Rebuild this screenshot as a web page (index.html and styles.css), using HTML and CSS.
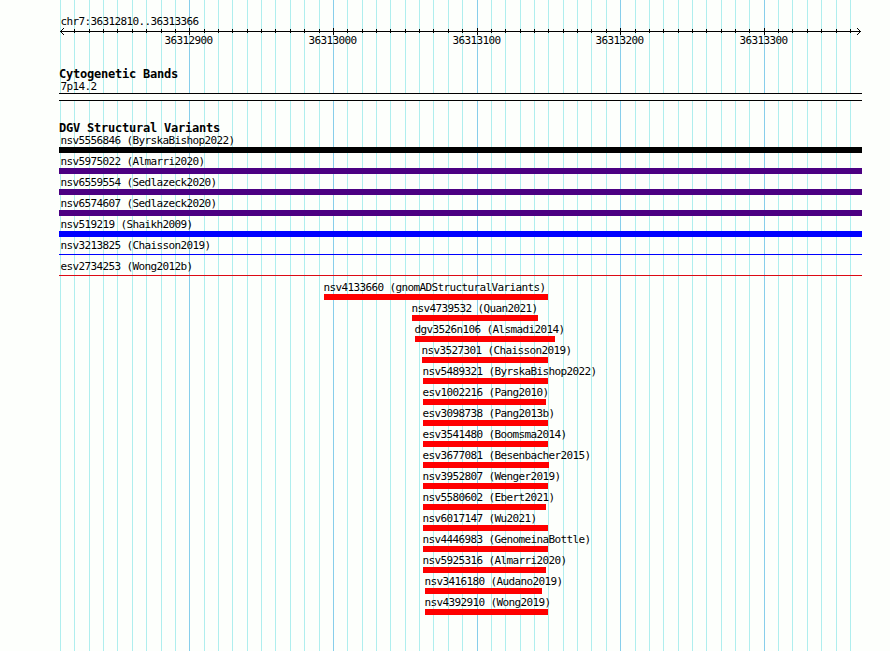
FILE: index.html
```
<!DOCTYPE html>
<html lang="en">
<head>
  <meta charset="UTF-8" />
  <meta name="viewport" content="width=device-width, initial-scale=1.0"/>
  <title>DGV Genome Browser</title>
  <link rel="stylesheet" href="styles.css">
</head>
<body>

  <div class="browser">
    <svg class="grid" id="grid" width="890" height="651"></svg>

    <div class="overview">
      <div class="label region">chr7:36312810..36313366</div>
      <svg class="ruler" id="ruler" width="890" height="22"></svg>
    </div>

    <div class="track bands">
      <h3>Cytogenetic Bands</h3>
      <div class="label">7p14.2</div>
      <div class="band"></div>
    </div>

    <div class="track variants">
      <h3>DGV Structural Variants</h3>
      <div id="variants"></div>
    </div>
  </div>

  <script src="script.js"></script>
</body>
</html>
```
FILE: styles.css
```
body {
  margin: 0;
  padding: 0;
  background-color: #fdfffc;
  color: #000;
  font-family: 'DejaVu Sans Mono', monospace;
  font-size: 11px;
}

.browser {
  position: relative;
  width: 890px;
  height: 651px;
  overflow: hidden;
}

.grid {
  position: absolute;
  top: 0;
  left: 0;
  z-index: -1;
}

.grid .minor {
  fill: #afeeee;
}

.grid .major {
  fill: #87ceeb;
}

.overview {
  padding-top: 15px;
  height: 53px;
}

.label {
  height: 13px;
  line-height: 13px;
  letter-spacing: -0.622px;
  text-indent: 0.4px;
  white-space: pre;
}

.region {
  margin-left: 60px;
}

.ruler {
  display: block;
  letter-spacing: -0.622px;
}

.ruler path {
  fill: none;
  stroke: #000;
}

.track {
  margin-left: 59px;
  width: 803px;
}

.track h3 {
  margin: 0;
  height: 12px;
  line-height: 13px;
  font-size: 12px;
  font-weight: bold;
  letter-spacing: -0.224px;
}

.bands {
  height: 54px;
}

.bands .label {
  margin-left: 1px;
}

.band {
  height: 6px;
  border-top: 1px solid #000;
  border-bottom: 1px solid #000;
  background-color: #fdfffc;
}

.variant {
  height: 21px;
}

.variant .label {
  margin-left: -1px;
}

.variant.wide .label {
  margin-left: 1px;
}

.bar {
  height: 6px;
}

.bar.thin {
  height: 1px;
  margin-top: 2px;
}

.black {
  background-color: #000;
}

.purple {
  background-color: #4b0082;
}

.blue {
  background-color: #00f;
}

.red {
  background-color: #f00;
}

.red.thin {
  background-color: #dc0a14;
}
```
FILE: script.js
```
const regionStart = 36312810;
const regionEnd = 36313366;
const left = 60;
const scale = 800 / (regionEnd - regionStart + 1);

// start and end are pixels from the left edge of the panel
const variants = [
  { name: "nsv5556846 (ByrskaBishop2022)", start: 59, end: 862, color: "black" },
  { name: "nsv5975022 (Almarri2020)", start: 59, end: 862, color: "purple" },
  { name: "nsv6559554 (Sedlazeck2020)", start: 59, end: 862, color: "purple" },
  { name: "nsv6574607 (Sedlazeck2020)", start: 59, end: 862, color: "purple" },
  { name: "nsv519219 (Shaikh2009)", start: 59, end: 862, color: "blue" },
  { name: "nsv3213825 (Chaisson2019)", start: 59, end: 862, color: "blue thin" },
  { name: "esv2734253 (Wong2012b)", start: 59, end: 862, color: "red thin" },
  { name: "nsv4133660 (gnomADStructuralVariants)", start: 324, end: 548, color: "red" },
  { name: "nsv4739532 (Quan2021)", start: 412, end: 538, color: "red" },
  { name: "dgv3526n106 (Alsmadi2014)", start: 415, end: 555, color: "red" },
  { name: "nsv3527301 (Chaisson2019)", start: 422, end: 548, color: "red" },
  { name: "nsv5489321 (ByrskaBishop2022)", start: 423, end: 548, color: "red" },
  { name: "esv1002216 (Pang2010)", start: 423, end: 546, color: "red" },
  { name: "esv3098738 (Pang2013b)", start: 423, end: 548, color: "red" },
  { name: "esv3541480 (Boomsma2014)", start: 423, end: 548, color: "red" },
  { name: "esv3677081 (Besenbacher2015)", start: 423, end: 549, color: "red" },
  { name: "nsv3952807 (Wenger2019)", start: 423, end: 548, color: "red" },
  { name: "nsv5580602 (Ebert2021)", start: 423, end: 546, color: "red" },
  { name: "nsv6017147 (Wu2021)", start: 423, end: 548, color: "red" },
  { name: "nsv4446983 (GenomeinaBottle)", start: 423, end: 548, color: "red" },
  { name: "nsv5925316 (Almarri2020)", start: 423, end: 546, color: "red" },
  { name: "nsv3416180 (Audano2019)", start: 425, end: 542, color: "red" },
  { name: "nsv4392910 (Wong2019)", start: 425, end: 548, color: "red" }
];

function drawScale() {
  let lines = "";
  let labels = "";
  // axis with an arrow head at each end
  let path = "M60 3.5H861M64 0L60.5 3.5L64 7M857 0L860.5 3.5L857 7";

  for (let pos = regionStart; pos <= regionEnd; pos += 10) {
    const x = Math.round(left + (pos - regionStart) * scale);
    const major = pos % 100 === 0;
    lines += `<rect class="${major ? "major" : "minor"}" x="${x}" y="0" width="1" height="651"/>`;
    if (pos > regionStart) {
      path += major ? `M${x + 0.5} 0V7` : `M${x + 0.5} 1V5`;
    }
    if (major) {
      labels += `<text x="${x - 24.6}" y="16">${pos}</text>`;
    }
  }

  document.getElementById("grid").innerHTML = lines;
  document.getElementById("ruler").innerHTML = `<path d="${path}"/>` + labels;
}

function drawVariants() {
  document.getElementById("variants").innerHTML = variants
    .map(
      (v) => `
      <div class="variant ${v.start === 59 ? "wide" : ""}" style="margin-left: ${v.start - 59}px">
        <div class="label">${v.name}</div>
        <div class="bar ${v.color}" style="width: ${v.end - v.start}px"></div>
      </div>`
    )
    .join("");
}

drawScale();
drawVariants();
```
